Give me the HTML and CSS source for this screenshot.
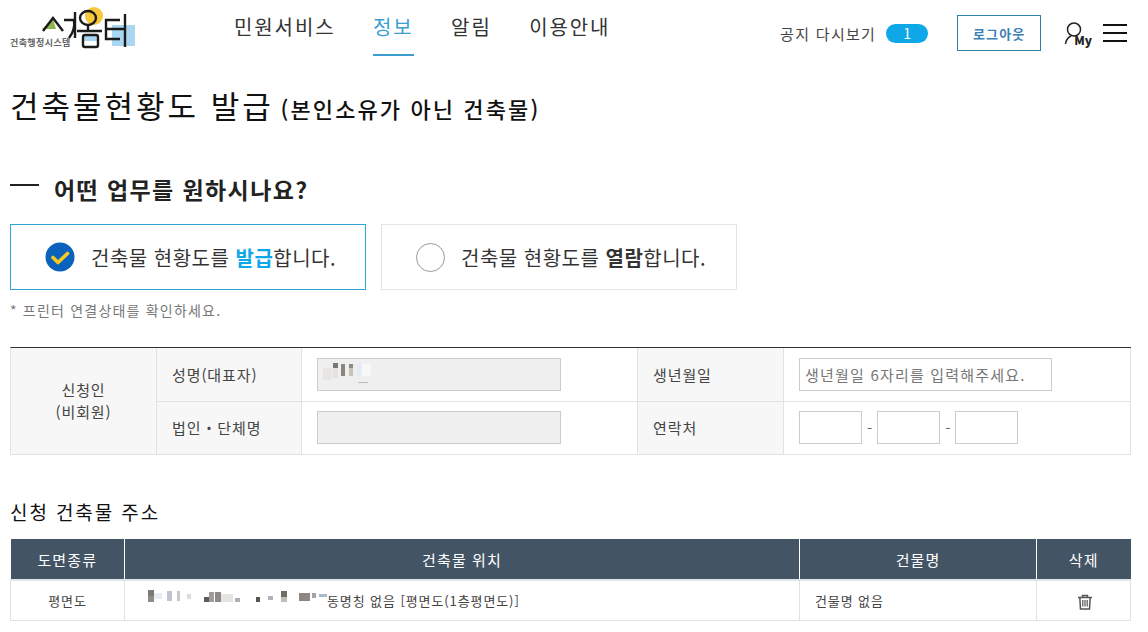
FILE: index.html
```html
<!DOCTYPE html>
<html lang="ko">
<head>
  <meta charset="UTF-8">
  <title>건축물현황도 발급</title>
  <link rel="stylesheet" href="styles.css">
</head>
<body>
  <header class="header">
    <div class="logo">
      <svg width="140" height="56" viewBox="0 0 140 56">
        <rect x="112" y="25" width="23" height="21" fill="#a9d6f0"/>
        <circle cx="94" cy="16" r="9" fill="#f5c93a"/>
        <path d="M42 29l11-10 3 10z" fill="#8db64b"/>
        <rect x="83" y="35" width="15" height="6" fill="#a9d6f0"/>
        <g fill="none" stroke="#1b1b1b" stroke-width="2.400">
          <path d="M43 31l10-13 10 13"/>
          <path d="M64 20h10c1 7-1 13-5 18M75 12v26"/>
          <ellipse cx="88" cy="18" rx="8" ry="7"/>
          <path d="M77 31h25M88 25v6"/>
          <rect x="83" y="35" width="15" height="12" rx="2"/>
          <path d="M120 20h-14v19h14M106 29h14M125 14v33M120 29h5"/>
        </g>
      </svg>
      <span class="logo-text">건축행정시스템</span>
    </div>
    <nav class="nav">
      <a class="nav-item">민원서비스</a>
      <a class="nav-item active">정보</a>
      <a class="nav-item">알림</a>
      <a class="nav-item">이용안내</a>
    </nav>
    <div class="util">
      <span class="notice">공지 다시보기</span>
      <span class="badge">1</span>
      <button class="logout">로그아웃</button>
      <span class="my">
        <svg width="20" height="26" viewBox="0 0 20 26">
          <circle cx="10" cy="8.500" r="6.500" fill="none" stroke="#222" stroke-width="1.500"/>
          <path d="M7 15c-2 1-5 3-5.500 8" fill="none" stroke="#222" stroke-width="1.500"/>
        </svg>
        <b>My</b>
      </span>
      <span class="burger"><i></i><i></i><i></i></span>
    </div>
  </header>

  <main class="main">
    <h1 class="title">건축물현황도 발급 <small>(본인소유가 아닌 건축물)</small></h1>

    <h2 class="question"><i class="dash"></i>어떤 업무를 원하시나요?</h2>

    <div class="choices">
      <div class="choice selected">
        <svg width="30" height="30" viewBox="0 0 30 30">
          <circle cx="15" cy="15" r="14.500" fill="#0b62bd"/>
          <path d="M8 15.500l5 5 9.500-9" fill="none" stroke="#f6c822" stroke-width="3.600" stroke-linecap="round" stroke-linejoin="round"/>
        </svg>
        <span>건축물 현황도를 <b class="blue">발급</b>합니다.</span>
      </div>
      <div class="choice">
        <span class="radio"></span>
        <span>건축물 현황도를 <b>열람</b>합니다.</span>
      </div>
    </div>
    <p class="hint">* 프린터 연결상태를 확인하세요.</p>

    <div class="form">
      <div class="cell head applicant">신청인<br>(비회원)</div>
      <div class="cell head">성명(대표자)</div>
      <div class="cell">
        <div class="input disabled w244">
          <svg width="52" height="22" viewBox="0 0 52 22">
            <rect x="0" y="5" width="9" height="12" fill="#e8e6e2"/>
            <rect x="10" y="0" width="5" height="5" fill="#777"/>
            <rect x="10" y="5" width="5" height="10" fill="#e4e2de"/>
            <rect x="18" y="1" width="4" height="12" fill="#8a8580"/>
            <rect x="26" y="1" width="4" height="4" fill="#8f8a84"/>
            <rect x="26" y="5" width="4" height="8" fill="#c8c2b8"/>
            <rect x="34" y="1" width="4" height="12" fill="#e2ecf8"/>
            <rect x="39" y="1" width="9" height="12" fill="#f7f7f7"/>
            <rect x="35" y="19" width="10" height="1" fill="#bbb"/>
          </svg>
        </div>
      </div>
      <div class="cell head">생년월일</div>
      <div class="cell"><div class="input w253 ph">생년월일 6자리를 입력해주세요.</div></div>

      <div class="cell head row2">법인・단체명</div>
      <div class="cell row2"><div class="input disabled w244"></div></div>
      <div class="cell head row2">연락처</div>
      <div class="cell phone row2">
        <div class="input w63"></div><span>-</span>
        <div class="input w63"></div><span>-</span>
        <div class="input w63"></div>
      </div>
    </div>

    <h3 class="sub">신청 건축물 주소</h3>

    <table class="list">
      <thead>
        <tr><th class="c1">도면종류</th><th class="c2">건축물 위치</th><th class="c3">건물명</th><th class="c4">삭제</th></tr>
      </thead>
      <tbody>
        <tr>
          <td class="center">평면도</td>
          <td class="addr">
            <svg class="mosaic" width="180" height="14" viewBox="0 0 180 14">
              <rect x="1" y="0" width="6" height="6" fill="#7d7a76"/><rect x="1" y="6" width="6" height="6" fill="#8f8c88"/>
              <rect x="7" y="3" width="8" height="6" fill="#e8ecef"/>
              <rect x="20" y="1" width="5" height="10" fill="#bfc4d0"/><rect x="30" y="1" width="3" height="10" fill="#c8c8c8"/>
              <rect x="40" y="4" width="4" height="5" fill="#d8dde2"/><rect x="57" y="7" width="5" height="5" fill="#5f5d5a"/>
              <rect x="62" y="2" width="5" height="10" fill="#a09a98"/><rect x="68" y="2" width="6" height="10" fill="#8d888a"/>
              <rect x="74" y="4" width="12" height="8" fill="#e6e4e0"/>
              <rect x="88" y="8" width="5" height="4" fill="#a8b0b8"/><rect x="109" y="7" width="4" height="5" fill="#56544f"/>
              <rect x="121" y="6" width="5" height="4" fill="#b0b4b8"/><rect x="134" y="1" width="6" height="6" fill="#6f6d6a"/><rect x="134" y="7" width="6" height="5" fill="#c0beb8"/>
              <rect x="152" y="3" width="11" height="8" fill="#8f8682"/><rect x="165" y="3" width="4" height="5" fill="#a0a6ac"/>
              <rect x="172" y="4" width="8" height="3" fill="#a8b8c4"/>
            </svg>동명칭 없음 [평면도(1층평면도)]
          </td>
          <td class="name">건물명 없음</td>
          <td class="center">
            <svg class="trash" width="16" height="16" viewBox="0 0 16 16">
              <path d="M1 3.500h14M5.500 3.500V1.500h5v2M2.800 3.500l.7 11.500h9l.7-11.500" fill="none" stroke="#555" stroke-width="1.500"/>
              <path d="M5.800 6v6.500M8 6v6.500M10.200 6v6.500" fill="none" stroke="#555" stroke-width="1.200"/>
            </svg>
          </td>
        </tr>
      </tbody>
    </table>
  </main>
</body>
</html>
```

FILE: styles.css
```css
* {
  box-sizing: border-box;
}
html, body {
  height: 632px;
  overflow: hidden;
}
body {
  margin: 0;
  background: #fff;
  color: #333;
  font-family: "Noto Sans CJK KR", "Noto Sans", sans-serif;
}
.header {
  display: flex;
  height: 56px;
  padding-right: 21px;
}
.logo {
  position: relative;
  width: 234px;
  flex: none;
}
.logo svg {
  position: absolute;
  left: 0;
  top: 0;
  filter: blur(0.3px);
}
.logo-text {
  position: absolute;
  left: 10px;
  top: 37px;
  font-size: 9px;
  line-height: 12px;
  font-weight: 700;
  color: #666;
  letter-spacing: 0.4px;
}
.nav {
  display: flex;
  gap: 37.5px;
}
.nav-item {
  height: 56px;
  font-size: 20px;
  line-height: 26px;
  padding-top: 14px;
  color: #333;
  letter-spacing: 1.9px;
}
.nav-item.active {
  color: #3a9fd0;
  border-bottom: 2px solid #3a9fd0;
}
.util {
  margin-left: auto;
  display: flex;
  align-items: center;
  height: 66px;
}
.notice {
  font-size: 15px;
  color: #444;
  letter-spacing: 1.3px;
}
.badge {
  width: 42px;
  height: 19px;
  margin-left: 10px;
  border-radius: 10px;
  background: #0ea7e8;
  color: #fff;
  font-size: 14px;
  line-height: 19px;
  text-align: center;
}
.logout {
  width: 84px;
  height: 36px;
  margin-left: 29px;
  padding: 0;
  background: #fff;
  border: 1px solid #2f7fa8;
  color: #3b80b5;
  font: 700 13px "Noto Sans CJK KR", sans-serif;
  letter-spacing: 1.2px;
}
.my {
  display: flex;
  align-items: flex-end;
  margin-left: 23px;
  height: 28px;
}
.my b {
  font-size: 12px;
  line-height: 14px;
  font-weight: 900;
  margin-left: -10px;
  color: #222;
}
.burger {
  display: flex;
  flex-direction: column;
  justify-content: space-between;
  width: 24px;
  height: 18px;
  margin-left: 11px;
}
.burger i {
  height: 2px;
  background: #111;
}
.main {
  padding: 0 17px 0 10px;
}
.title {
  margin: 27px 0 0;
  font-size: 31px;
  line-height: 44px;
  font-weight: 400;
  color: #111;
  letter-spacing: 3px;
}
.title small {
  margin-left: -5px;
  font-size: 22px;
  font-weight: 500;
  letter-spacing: 2.1px;
}
.question {
  display: flex;
  align-items: center;
  margin: 42px 0 0;
  font-size: 23px;
  line-height: 34px;
  font-weight: 700;
  color: #222;
  letter-spacing: 1.4px;
}
.dash {
  width: 29px;
  height: 2px;
  margin-right: 15px;
  margin-top: -8px;
  background: #222;
}
.choices {
  display: flex;
  gap: 15px;
  margin-top: 18px;
}
.choice {
  display: flex;
  align-items: center;
  gap: 16px;
  width: 356px;
  height: 66px;
  padding-left: 34px;
  border: 1px solid #e5e5e5;
  font-size: 20px;
  color: #333;
  letter-spacing: 0.5px;
}
.choice.selected {
  border-color: #2fa5d6;
}
.blue {
  color: #0ea7e8;
}
.radio {
  width: 29px;
  height: 29px;
  border-radius: 50%;
  border: 1px solid #999;
}
.hint {
  margin: 10px 0 0;
  font-size: 14px;
  line-height: 20px;
  color: #777;
  letter-spacing: 1.2px;
}
.form {
  display: grid;
  grid-template-columns: 146px 145px 336px 146px 347px;
  grid-template-rows: 54px 53px;
  margin-top: 27px;
  border-top: 1px solid #333;
  border-left: 1px solid #e2e2e2;
}
.cell {
  display: flex;
  align-items: center;
  padding-left: 15px;
  border-right: 1px solid #e2e2e2;
  border-bottom: 1px solid #e2e2e2;
  font-size: 15px;
  color: #444;
  letter-spacing: 0.9px;
}
.cell.row2 {
  padding-bottom: 1px;
}
.cell.head {
  background: #f7f7f7;
}
.applicant {
  grid-row: span 2;
  padding: 0;
  justify-content: center;
  text-align: center;
  line-height: 22px;
}
.input {
  height: 33px;
  background: #fff;
  border: 1px solid #ccc;
  font-size: 15px;
  line-height: 31px;
  padding-left: 5px;
}
.input.disabled {
  background: #efefef;
}
.input.disabled svg {
  display: block;
  margin-top: 4px;
}
.ph {
  color: #777;
  letter-spacing: 1.2px;
}
.w244 {
  width: 244px;
}
.w253 {
  width: 253px;
}
.w63 {
  width: 63px;
}
.phone {
  gap: 5px;
}
.phone span {
  color: #666;
  letter-spacing: 0;
}
.sub {
  margin: 43px 0 0;
  font-size: 19px;
  line-height: 28px;
  font-weight: 400;
  color: #111;
  letter-spacing: 1.9px;
}
.list {
  width: 100%;
  margin-top: 13px;
  border-collapse: collapse;
  table-layout: fixed;
  font-size: 13px;
}
.list th {
  height: 41px;
  padding: 0;
  background: #435465;
  color: #fff;
  font-size: 15px;
  font-weight: 400;
  letter-spacing: 1.1px;
  border-left: 1px solid #fff;
  border-bottom: 2px solid #dfe6ea;
}
.list th:first-child {
  border-left: 0;
}
.c1 {
  width: 114px;
}
.c2 {
  width: 675px;
}
.c3 {
  width: 237px;
}
.list td {
  height: 40px;
  padding: 0;
  border: 1px solid #e2e2e2;
  color: #444;
  letter-spacing: 0.9px;
}
.center {
  text-align: center;
}
.addr {
  padding-left: 22px !important;
}
.mosaic {
  vertical-align: 2px;
}
.name {
  padding-left: 15px !important;
}
.trash {
  vertical-align: middle;
  margin-left: 3px;
}
```
